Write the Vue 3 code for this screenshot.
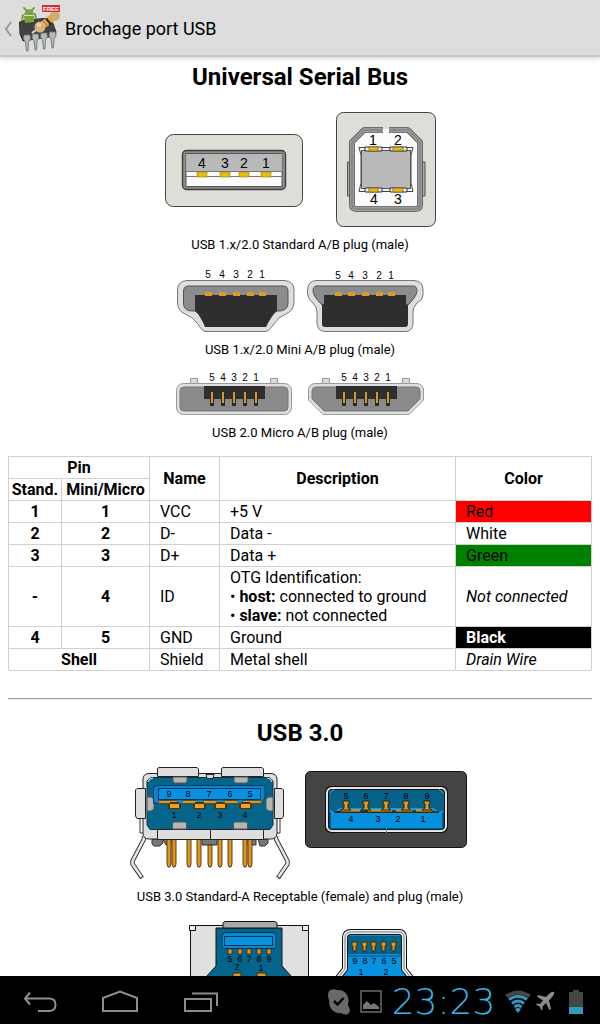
<script setup>
const pins = (labels, xs) => labels.split('').map((n, i) => ({ n, x: xs[i] }))

const stdA = pins('4321', [202, 225, 244, 266])
const miniA = pins('54321', [208, 222, 236, 250, 262])
const miniB = pins('54321', [338, 351, 365, 379, 391])
const microA = pins('54321', [212, 223, 234, 245, 256])
const microB = pins('54321', [344, 355, 366, 377, 388])
const recTop = pins('98765', [169, 188, 209, 230, 250])
const recBottom = pins('1234', [174, 199, 220, 245])
const recLegs = [169, 174, 189, 199, 210, 220, 230, 245, 250]
const plugTop = pins('56789', [346, 366, 386, 406, 427])
const plugBottom = pins('4321', [351, 378, 398, 423])
const stdB3 = pins('56789', [230, 240, 249, 259, 269])
const microB3 = pins('98765', [355, 365, 374, 384, 394])
const chipLegs = [[26, 35, 51], [34.5, 34, 50], [43, 33, 49], [51.5, 32, 48]]
</script>

<template>
  <div class="screen">
    <header class="bar">
      <button class="up" type="button" aria-label="Navigate up">
        <svg width="8" height="16" viewBox="0 0 8 16"><path d="M7 1 L2 8 L7 15" fill="none" stroke="#999" stroke-width="2" /></svg>
        <svg class="logo" width="46" height="50" viewBox="16 4 46 50">
          <path d="M18.500 22 L24 20 L50 18 L55 32 L54 36 L22 41 L19 34Z" fill="#414141" stroke="#303030" />
          <path
            v-for="[x, top, end] in chipLegs"
            :key="x"
            :d="`M${x - 3} ${top} h6 l.5 4 -2 3 L${x + 1} ${end} h-1.500 L${x - 1.5} ${top + 7} l-2 -3Z`"
            fill="#b4bab7" stroke="#68716c" stroke-width=".8"
          />
          <g fill="#79a33b">
            <path d="M23 15 Q24 9 28 9 Q33 10 33 15Z" />
            <path d="M23 16 H33 V22 L24 23Z" />
            <path d="M25 10 l-2 -2 M31 10 l2 -2 M22 15 l-1 5 M34 14 l1 4" stroke="#79a33b" stroke-width="2" stroke-linecap="round" />
          </g>
          <path d="M31 33 L35 30" stroke="#ddd" stroke-width="2" />
          <path d="M39 27 L53 16" stroke="#d8b27c" stroke-width="7" stroke-linecap="round" />
          <circle cx="39" cy="27" r="5.500" fill="#d9b480" /><circle cx="54" cy="16" r="5" fill="#d2aa72" />
          <circle cx="38" cy="25" r="2" fill="#ecd2aa" />
          <path d="M42 20.500 l5 6" stroke="#e28a20" stroke-width="2" />
          <path d="M45 18.500 l5 6" stroke="#2b2118" stroke-width="2" />
          <path d="M48 16.500 l4 6" stroke="#e8a02c" stroke-width="2" />
          <rect x="41" y="5" width="18" height="7" fill="#d23030" />
          <text x="50" y="11" class="free">FREE</text>
        </svg>
      </button>
      <span class="title">Brochage port USB</span>
    </header>

    <main class="content">
      <h1>Universal Serial Bus</h1>

      <figure>
        <div class="row standard">
          <svg width="138" height="97" viewBox="165 110 138 97">
            <rect x="165.500" y="134.500" width="137" height="72" rx="8" fill="#deddd8" stroke="#444" />
            <rect x="182.500" y="150.500" width="103" height="39" rx="4" fill="#8d8d8d" stroke="#3e3e3e" stroke-width="1.400" />
            <rect x="186" y="153.500" width="96" height="33" fill="#fbfbfb" stroke="#555" />
            <rect x="186.500" y="154" width="95" height="17" fill="#b9b9b9" />
            <path d="M186 171.500 H282 M186 176.500 H282" stroke="#777" />
            <g v-for="p in stdA" :key="p.n">
              <rect :x="p.x - 5" y="172" width="10" height="5" fill="#e8bf0c" stroke="#8a7a30" stroke-width=".6" />
              <text :x="p.x" y="168" class="d14">{{ p.n }}</text>
            </g>
          </svg>
          <svg width="100" height="117" viewBox="336 110 100 117">
            <rect x="336.500" y="112.500" width="99" height="114" rx="7" fill="#deddd8" stroke="#444" />
            <path d="M347.500 162 h4 v34 h-4Z M421 162 h4 v34 h-4Z" fill="#aaa" stroke="#555" />
            <path d="M352 139 L362 129 H411 L420 139 V206 Q420 209 417 209 H355 Q352 209 352 206Z" fill="#fbfbfb" />
            <g fill="none" stroke-linejoin="round">
              <path d="M383 130 H364 L352 142 V205 Q352 209 356 209 H416 Q420 209 420 205 V142 L408 130 H389" stroke="#4b4b4b" stroke-width="5.600" />
              <path d="M383 130 H364 L352 142 V205 Q352 209 356 209 H416 Q420 209 420 205 V142 L408 130 H389" stroke="#9c9c9c" stroke-width="4" />
              <path d="M383 130 H364 L352 142 V205 Q352 209 356 209 H416 Q420 209 420 205 V142 L408 130 H389" stroke="#777" />
            </g>
            <path d="M359 147.500 H413 L411 155 V183 L413 191.500 H359 L361 183 V155Z" fill="#f5f5f5" stroke="#444" />
            <rect x="361.500" y="150.500" width="49" height="38" fill="#b9b9b9" stroke="#555" />
            <g v-for="y in [147, 188]" :key="y">
              <path :d="`M365 ${y} h17 v4 h-17Z M390 ${y} h17 v4 h-17Z`" fill="#eee" stroke="#333" />
              <path :d="`M369 ${y} h9 v4 h-9Z M393 ${y} h10 v4 h-10Z`" fill="#e6b90c" stroke="#5a4a10" stroke-width=".6" />
            </g>
            <text x="373" y="145" class="d14">1</text><text x="398" y="145" class="d14">2</text>
            <text x="374" y="204" class="d14">4</text><text x="398" y="204" class="d14">3</text>
          </svg>
        </div>
        <figcaption>USB 1.x/2.0 Standard A/B plug (male)</figcaption>
      </figure>

      <figure>
        <div class="row mini">
          <svg width="116" height="64" viewBox="177 268 116 64">
            <path d="M187 280.500 H284 Q294 281 294 290 V303 Q293 311 286 314 Q278 317 274 324 Q269 331.500 265 331.500 H206 Q202 331.500 198 324 Q193 317 185 314 Q178 311 177.500 303 V290 Q178 281 187 280.500Z" fill="#dedede" stroke="#777" />
            <path d="M188 286 H283 Q288 286 288 291 V304 Q287 311 279 311 H192 Q184 311 183.500 304 V291 Q184 286 188 286Z" fill="#8c8c8c" stroke="#555" />
            <path d="M195 295 H277 V311 Q272 315 266 327 H205 Q200 315 195 311Z" fill="#2e2e2e" />
            <g v-for="p in miniA" :key="p.n">
              <rect :x="p.x - 3" y="292" width="7" height="4" fill="#dc9a2d" />
              <text :x="p.x" y="278" class="d9">{{ p.n }}</text>
            </g>
          </svg>
          <svg width="116" height="64" viewBox="307 268 116 64">
            <path d="M316 280.500 H414 Q423 281 423 290 V295 Q423 300 417 303 Q413 307 413 312 V323 Q413 331 406 331.500 H325 Q317 331 317 323 V312 Q317 307 313 303 Q307 299 307.500 290 Q308 281 316 280.500Z" fill="#dedede" stroke="#777" />
            <path d="M317 286 H413 Q417 286 417 291 Q417 296 408 305 H322 Q313 296 313 291 Q313 286 317 286Z" fill="#8c8c8c" stroke="#555" />
            <path d="M324 295 H406 V304 L408 305 V324 Q408 327 405 327 H325 Q322 327 322 324 V305 L324 304Z" fill="#2e2e2e" />
            <g v-for="p in miniB" :key="p.n">
              <rect :x="p.x - 3" y="292" width="7" height="4" fill="#dc9a2d" />
              <text :x="p.x" y="279" class="d9">{{ p.n }}</text>
            </g>
          </svg>
        </div>
        <figcaption>USB 1.x/2.0 Mini A/B plug (male)</figcaption>
      </figure>

      <figure>
        <div class="row micro">
          <svg width="116" height="42" viewBox="176 373 116 42">
            <path d="M190.500 384 v-5.500 h7 v5.500 M270.500 384 v-5.500 h7 v5.500" fill="#ddd" stroke="#999" />
            <rect x="176.500" y="383.500" width="115" height="31" rx="7" fill="#dedede" stroke="#999" />
            <rect x="180" y="387" width="108" height="24" rx="4" fill="#8a8a8a" stroke="#777" />
            <rect x="204" y="386" width="61" height="13" fill="#2e2e2e" />
            <g v-for="p in microA" :key="p.n">
              <rect :x="p.x - 2" y="392" width="4" height="14" fill="#2a2a2a" />
              <rect :x="p.x - 1" y="392" width="2" height="11" fill="#d5962c" />
              <text :x="p.x" y="381" class="d9">{{ p.n }}</text>
            </g>
          </svg>
          <svg width="116" height="42" viewBox="308 373 116 42">
            <path d="M322.500 384 v-5.500 h7 v5.500 M402.500 384 v-5.500 h7 v5.500" fill="#ddd" stroke="#999" />
            <path d="M315 383.500 H417 Q423 384 423.500 390 V400 L409 414.500 H323 L308.500 400 V390 Q309 384 315 383.500Z" fill="#dedede" stroke="#999" />
            <path d="M316 387 H416 Q420 387 420 391 V399 L408 411 H324 L312 399 V391 Q312 387 316 387Z" fill="#8a8a8a" stroke="#777" />
            <rect x="336" y="386" width="61" height="13" fill="#2e2e2e" />
            <g v-for="p in microB" :key="p.n">
              <rect :x="p.x - 2" y="392" width="4" height="14" fill="#2a2a2a" />
              <rect :x="p.x - 1" y="392" width="2" height="11" fill="#d5962c" />
              <text :x="p.x" y="381" class="d9">{{ p.n }}</text>
            </g>
          </svg>
        </div>
        <figcaption>USB 2.0 Micro A/B plug (male)</figcaption>
      </figure>

      <table>
        <colgroup><col class="c1" /><col class="c2" /><col class="c3" /><col /><col class="c5" /></colgroup>
        <thead>
          <tr><th colspan="2">Pin</th><th rowspan="2">Name</th><th rowspan="2">Description</th><th rowspan="2">Color</th></tr>
          <tr><th>Stand.</th><th>Mini/Micro</th></tr>
        </thead>
        <tbody>
          <tr><th>1</th><th>1</th><td>VCC</td><td>+5 V</td><td class="red">Red</td></tr>
          <tr><th>2</th><th>2</th><td>D-</td><td>Data -</td><td>White</td></tr>
          <tr><th>3</th><th>3</th><td>D+</td><td>Data +</td><td class="green">Green</td></tr>
          <tr>
            <th>-</th><th>4</th><td>ID</td>
            <td>OTG Identification:<br />• <b>host:</b> connected to ground<br />• <b>slave:</b> not connected</td>
            <td><i>Not connected</i></td>
          </tr>
          <tr><th>4</th><th>5</th><td>GND</td><td>Ground</td><td class="black">Black</td></tr>
          <tr><th colspan="2">Shell</th><td>Shield</td><td>Metal shell</td><td><i>Drain Wire</i></td></tr>
        </tbody>
      </table>

      <hr />

      <h2>USB 3.0</h2>

      <figure>
        <div class="row usb3">
          <svg width="162" height="113" viewBox="129 766 162 113">
            <g fill="none" stroke-linejoin="round">
              <path d="M144 836 V839 L132.500 861 V864 L142 878 M276 836 V839 L287.500 861 V864 L278 878" stroke="#333" stroke-width="4.500" />
              <path d="M144 836 V839 L132.500 861 V864 L141.500 877 M276 836 V839 L287.500 861 V864 L278.500 877" stroke="#e6e6e6" stroke-width="2.600" />
            </g>
            <path d="M152 839 h11 v4 l-3 3 h-6 l-2 -2Z M202 839 h15 v6 h-15Z M248 839 h8 v6 h-8Z M258 839 h10 v4 l-3 3 h-5Z M163 839 h8 v6 h-5Z" fill="#777" stroke="#333" />
            <path v-for="x in recLegs" :key="x" :d="`M${x - 2} ${x === 210 ? 845 : 839} V864 l1 3 h2 l1 -3 V${x === 210 ? 845 : 839}Z`" fill="#df961d" stroke="#4b3312" stroke-width=".9" />
            <path d="M140 818 V833 H144 M280 818 V833 H276" fill="none" stroke="#333" />
            <path d="M149 773.500 H271 Q277 774 277 779 V834 Q276 839 271 839 H149 Q143 839 143 833 V779 Q143 774 149 773.500Z" fill="#ddd" stroke="#222" />
            <path d="M151 777.500 H269 L273 781 V825 L270 829.500 H150 L147 825 V781Z" fill="#04648a" stroke="#12303c" />
            <path d="M148 782 Q149 778 153 778 M272 782 Q271 778 267 778" fill="none" stroke="#eee" />
            <g fill="#dedede" stroke="#222">
              <path d="M157.500 776.500 V768.500 L159 767.500 H197 L198.500 769 V776.500Z M221.500 776.500 V768.500 L223 767.500 H262 L263.500 769 V776.500Z" />
              <path d="M145.500 788.500 H137 L135.500 790 V816 L137 818.500 H145.500Z M274.500 788.500 H282 L283.500 790 V816 L282 818.500 H274.500Z" />
              <path d="M157.500 829.500 h53 v10 h-53Z M210.500 829.500 h53 v10 h-53Z" />
              <path d="M206 774.500 h8 l-1 4 h-6Z" />
            </g>
            <g fill="#b5b5b5" stroke="#555">
              <path d="M173 777 h14 v5 l-2 1 h-10 l-2 -1Z M234 777 h14 v5 l-2 1 h-10 l-2 -1Z M172.500 829 v-6 l2 -1 h10 l2 1 v6Z M233.500 829 v-6 l2 -1 h10 l2 1 v6Z" />
              <path d="M147 797 h4 l3 2 v10 l-3 2 h-4Z M273 797 h-4 l-3 2 v10 l3 2 h4Z" />
            </g>
            <path d="M157 785.500 H263 L265 788 V798 L261 803 H159 L153.500 803.500 V788Z" fill="#0b83d2" stroke="#063f60" />
            <path d="M160 800.500 H260 L263 803.500 H157Z" fill="#df961d" stroke="#3c2f18" stroke-width=".6" />
            <path d="M176 800 h8 l-4 4Z M196 800 h8 l-4 4Z M216 800 h8 l-4 4Z M236 800 h8 l-4 4Z" fill="#0a8ede" stroke="#064468" stroke-width=".5" />
            <rect x="158.500" y="788.500" width="102" height="11" fill="#0a90e0" stroke="#053a59" />
            <text v-for="p in recTop" :key="p.n" :x="p.x" y="797" class="d8">{{ p.n }}</text>
            <g v-for="p in recBottom" :key="p.n">
              <path :d="`M${p.x - 4} 802 h9 v2 h2 v5 h-13 v-5 h2Z`" fill="#4a3517" />
              <rect :x="p.x - 4" y="804" width="9" height="4" fill="#eea21e" />
              <text :x="p.x" y="818" class="d8">{{ p.n }}</text>
            </g>
          </svg>
          <svg width="166" height="83" viewBox="305 766 166 83">
            <rect x="305.500" y="771.500" width="161" height="76" rx="5" fill="#444" stroke="#111" />
            <rect x="327" y="788" width="119" height="43" rx="4" fill="#05628a" stroke="#111" stroke-width="4" />
            <path d="M330 812 H443 V829 H330Z" fill="#058fdd" stroke="#03324e" />
            <path d="M330 811 Q334 814 337 811 L340 809 H433 L436 811 Q440 814 443 811" fill="none" stroke="#08a0e8" stroke-width="2" />
            <path d="M334 812 H439" stroke="#3b2a12" stroke-width="2" />
            <path d="M341 810.500 h19 M368 810.500 h24 M396 810.500 h16 M416 810.500 h16" stroke="#dd941a" stroke-width="2" />
            <rect x="327" y="788" width="119" height="43" rx="5" fill="none" stroke="#e4e4e4" stroke-width="2" />
            <path d="M386.500 829 v4 M330 793 l4 -4 M443 793 l-4 -4" stroke="#888" />
            <g v-for="p in plugTop" :key="p.n">
              <path :d="`M${p.x - 3} 801 h6 v3 h-1 v4 l3 2 h-10 l3 -2 v-4 h-1Z`" fill="#e0981b" stroke="#2c1e0b" />
              <text :x="p.x" y="799" class="d8">{{ p.n }}</text>
            </g>
            <text v-for="p in plugBottom" :key="p.n" :x="p.x" y="822" class="d8">{{ p.n }}</text>
          </svg>
        </div>
        <figcaption>USB 3.0 Standard-A Receptable (female) and plug (male)</figcaption>
      </figure>

      <figure>
        <div class="row usb3b">
          <svg width="122" height="90" viewBox="188 920 122 90">
            <path d="M190.500 925.500 H308.500 V1008 H190.500Z" fill="#e0e0e0" stroke="#111" />
            <path d="M216 928 H282 V966 L292 977 V1008 H206 V977 L216 966Z" fill="#04648a" stroke="#111" />
            <path d="M223 928 V923 L225 921.500 H275 L277 923 V928Z" fill="#aaa" stroke="#111" />
            <path d="M189.500 925.500 h6 v5 h-6Z M302.500 925.500 h6 v5 h-6Z" fill="#eee" stroke="#111" />
            <path d="M225 932.500 H273 L276 935 V947 L274 948.500 H224 L222 947 V935Z" fill="#0788d4" stroke="#043650" />
            <rect x="224.500" y="936.500" width="48" height="9" fill="#0791de" stroke="#043650" />
            <g v-for="p in stdB3" :key="p.n">
              <rect :x="p.x - 2" y="949" width="4" height="5" fill="#df961d" stroke="#3c2a10" stroke-width=".7" />
              <text :x="p.x" y="962" class="d8">{{ p.n }}</text>
            </g>
            <text x="237" y="970" class="d8">2</text><text x="261" y="971" class="d8">1</text>
            <path d="M233 973 h8 v10 h-8Z M257 973 h9 v10 h-9Z" fill="#df961d" stroke="#3c2a10" />
          </svg>
          <svg width="77" height="90" viewBox="335 920 77 90">
            <path d="M347 935 H402 V967 L412 978 V1008 H337 V978 L347 967Z" fill="#0791de" />
            <rect x="347" y="936" width="54" height="18" fill="#04648a" />
            <path d="M347 953 H402 M347 956 H402" stroke="#04507a" />
            <g fill="none">
              <path d="M334 983 L345 969 V938 Q345 932 351 932 H399 Q404 932 404 938 V969 L415 983" stroke="#111" stroke-width="6" />
              <path d="M334 983 L345 969 V938 Q345 932 351 932 H399 Q404 932 404 938 V969 L415 983" stroke="#eee" stroke-width="4" />
              <path d="M334 983 L345 969 V938 Q345 932 351 932 H399 Q404 932 404 938 V969 L415 983" stroke="#777" />
            </g>
            <g v-for="p in microB3" :key="p.n">
              <path :d="`M${p.x - 3} 942 h5 v4 h-1 v5 h-3 v-5 h-1Z`" fill="#e0981b" stroke="#3c2a10" />
              <text :x="p.x" y="964" class="d8">{{ p.n }}</text>
            </g>
            <text x="361" y="975" class="d8">1</text><text x="386" y="975" class="d8">2</text>
          </svg>
        </div>
      </figure>
    </main>

    <nav class="system">
      <button type="button" aria-label="Back">
        <svg width="34" height="24" viewBox="23 994 34 24"><path d="M30 996.500 L25 1002.500 L30 1008.500 M25 1002.500 H49 Q55.500 1002.500 55.500 1008.500 Q55.500 1015 49 1015 H38" fill="none" stroke="#8d8d8d" stroke-width="2" /></svg>
      </button>
      <button type="button" aria-label="Home">
        <svg width="38" height="24" viewBox="101 994 38 24"><path d="M103 1015 V1002 L120 995.500 L137 1002 V1015Z" fill="none" stroke="#8d8d8d" stroke-width="2" /></svg>
      </button>
      <button type="button" aria-label="Recent apps">
        <svg width="36" height="24" viewBox="182 994 36 24"><path d="M185 1003 H211 V1015 H185Z M192 997.500 H217 V1010" fill="none" stroke="#8d8d8d" stroke-width="2" /></svg>
      </button>
      <div class="status">
        <svg width="22" height="26" viewBox="328 993 22 26">
          <path d="M329 995 Q332 992 337 994 Q345 993 348 1001 Q349 1005 348 1009 Q351 1014 349 1017 Q346 1020 341 1017 Q334 1018 330 1011 Q329 1008 329 1004 Q327 999 329 995Z" fill="#686a68" />
          <path d="M334 1005 L337.500 1008.500 L343.500 1002" fill="none" stroke="#000" stroke-width="2.500" />
        </svg>
        <svg class="picture" width="22" height="24" viewBox="360 994 22 24">
          <rect x="361" y="995" width="20" height="21" fill="none" stroke="#6c6c6c" stroke-width="1.500" />
          <path d="M363 1013 V1009 L367 1005 L371 1009 L374 1007 L379 1011 V1013Z" fill="#777" />
        </svg>
        <time class="clock">23:23</time>
        <svg width="26" height="24" viewBox="505 993 26 24">
          <path d="M505 998 Q518 989 531 998 L528 1001 Q518 994 508 1001Z" fill="#454545" />
          <g fill="none" stroke="#3498bd" stroke-width="3">
            <path d="M509 1002.500 Q518 996 527 1002.500 M512 1006.500 Q518 1001.500 524 1006.500 M514.500 1010 Q518 1007 521.500 1010" />
          </g>
          <path d="M515 1012 Q518 1010 521 1012 L518 1016Z" fill="#3498bd" />
        </svg>
        <svg class="plane" width="19" height="22" viewBox="536 994 19 22">
          <path d="M554 995 Q552 994 549 997 L546 1000 L538 998 L537 999.500 L543 1003.500 L540 1007 L537 1006.500 L536 1007.500 L539.500 1009.500 L541.500 1013.500 L542.500 1012.500 L542.500 1009.500 L546 1006 L549.500 1013 L551 1012 L549 1003.500 L552 1000 Q555 997 554 995Z" fill="#8c8c8c" />
        </svg>
        <svg class="battery" width="14" height="25" viewBox="569 992 14 25">
          <path d="M573 994 V992 H579 V994 H583 V1009 H569 V994Z" fill="#444" />
          <rect x="569" y="1009" width="14" height="7" fill="#3498bd" />
        </svg>
      </div>
    </nav>
  </div>
</template>

<style>
body { margin: 0; }
</style>

<style scoped>
.screen {
  display: flex;
  flex-direction: column;
  height: 100vh;
  overflow: hidden;
  background: #fff;
  color: #000;
  font-family: Roboto, "Noto Sans", sans-serif;
  font-size: 16px;
  line-height: 19px;
}
svg { display: block; flex: none; overflow: visible; }
button { border: 0; padding: 0; background: none; cursor: pointer; }
.bar {
  flex: none;
  display: flex;
  align-items: center;
  gap: 2px;
  height: 53px;
  padding: 2px 0 0 4px;
  background: #ddd;
  border-bottom: 2px solid #c6c6c6;
  box-shadow: 0 1px 5px rgba(0, 0, 0, 0.2);
  position: relative;
}
.up { display: flex; align-items: center; gap: 5px; }
.title { font-size: 18px; line-height: 24px; }
.free { font: bold 6px "Liberation Sans", sans-serif; fill: #fff; text-anchor: middle; }
.content {
  flex: 1;
  min-height: 0;
  overflow-y: auto;
  scrollbar-width: none;
  padding: 6px 8px 0;
}
h1, h2 {
  margin: 0 0 19px;
  font-size: 24px;
  line-height: 28px;
  font-weight: 700;
  text-align: center;
}
figure { margin: 0 0 16px; }
.row { display: flex; justify-content: center; align-items: center; }
.standard { gap: 33px; align-items: flex-start; }
.mini { gap: 14px; }
.micro { gap: 16px; }
.usb3 { gap: 14px; align-items: flex-start; }
.usb3b { gap: 25px; }
figcaption { margin-top: 10px; font-size: 13px; line-height: 15px; text-align: center; }
text { font-family: "Liberation Sans", Arial, sans-serif; fill: #000; text-anchor: middle; }
.d14 { font-size: 14px; }
.d9 { font-size: 10px; }
.d8 { font-size: 9px; }
table { width: 100%; border-collapse: collapse; table-layout: fixed; }
.c1 { width: 53px; }
.c2 { width: 88px; }
.c3 { width: 70px; }
.c5 { width: 136px; }
th, td { border: 1px solid #d0d0d0; padding: 1px 10px; text-align: left; }
th { padding: 1px 0; text-align: center; font-weight: 700; }
.red { background: #f00; }
.green { background: #008000; }
.black { background: #000; color: #fff; font-weight: 700; }
hr { margin: 27px 0 19px; border: 0; border-top: 1px solid #999; border-bottom: 1px solid #eee; }
.system {
  flex: none;
  display: flex;
  align-items: center;
  height: 48px;
  padding-right: 17px;
  background: #000;
}
.system button { display: flex; justify-content: center; width: 80px; padding-top: 10px; padding-bottom: 6px; }
.status { display: flex; align-items: center; margin-left: auto; padding-top: 10px; padding-bottom: 6px; }
.picture { margin-left: 10px; }
.clock {
  width: 123px;
  font-family: "DejaVu Sans Light", "DejaVu Sans", Inter, sans-serif;
  font-size: 36px;
  line-height: 26px;
  font-weight: 200;
  text-align: center;
  color: #33b5e5;
}
.plane { margin-left: 5px; }
.battery { margin-left: 14px; }
</style>
